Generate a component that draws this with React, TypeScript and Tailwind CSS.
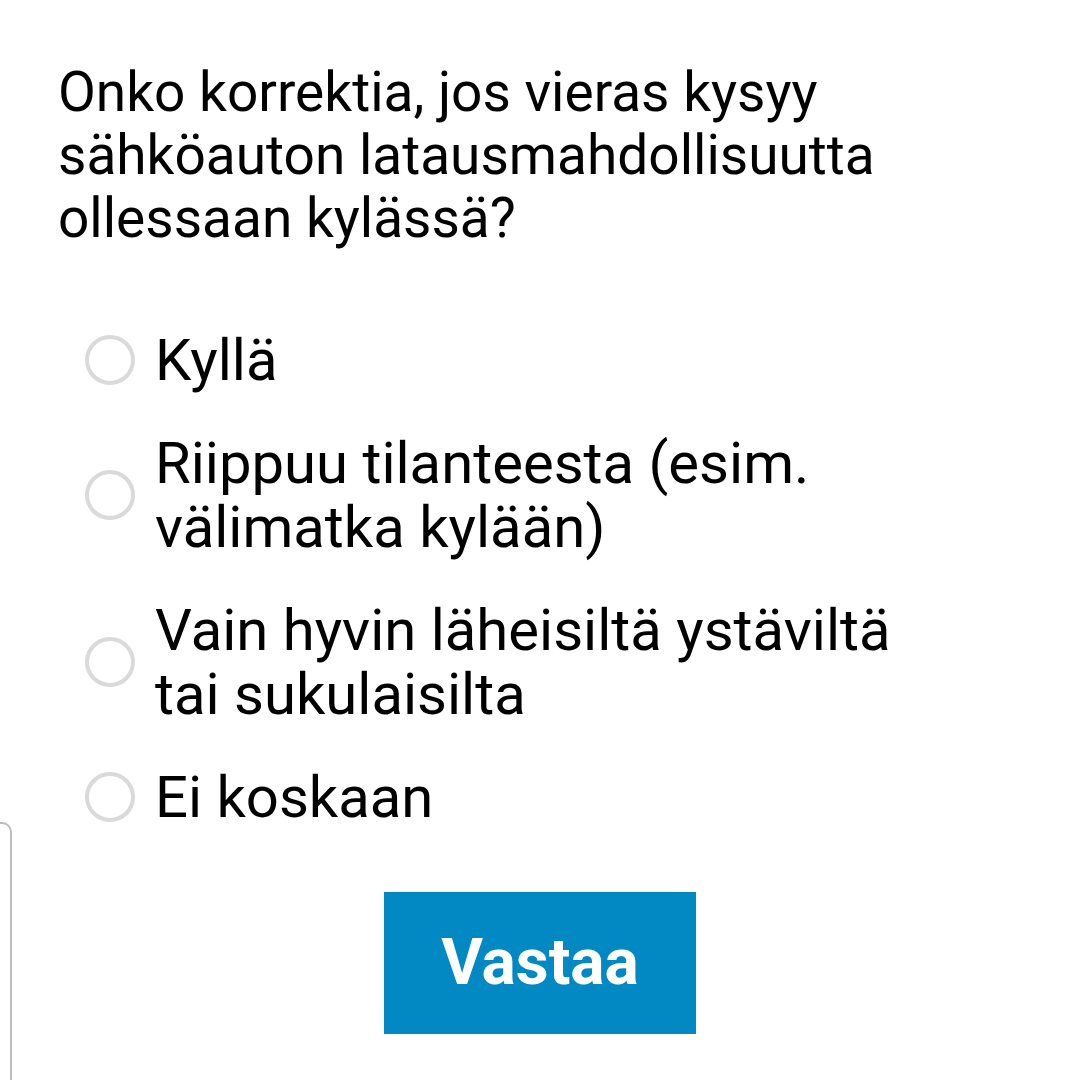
import React from "react";

const options = [
  "Kyllä",
  "Riippuu tilanteesta (esim. välimatka kylään)",
  "Vain hyvin läheisiltä ystäviltä tai sukulaisilta",
  "Ei koskaan",
];

export default function App() {
  return (
    <div
      className="relative w-[1080px] h-[1080px] overflow-hidden bg-white text-black"
      style={{ fontFamily: "Roboto, 'Noto Sans', sans-serif" }}
    >
      {/* edge of the next card, peeking in from the left */}
      <div className="absolute left-[-100px] top-[822px] w-[112px] h-[400px] rounded-tr-[10px] border-2 border-[#bdbdbd] bg-white" />

      <div className="flex flex-col pt-[61px]">
        <h1 className="pl-[58px] w-[940px] text-[55px] leading-[63px] font-normal">
          Onko korrektia, jos vieras kysyy sähköauton latausmahdollisuutta ollessaan kylässä?
        </h1>

        <div className="mt-[78px] pl-[85px] flex flex-col gap-[39px]">
          {options.map((label) => (
            <label key={label} className="flex items-center gap-[20px]">
              <span className="w-[50px] h-[50px] shrink-0 rounded-full border-[4px] border-[#dadada] bg-white" />
              <span className="w-[790px] text-[58px] leading-[64px]">{label}</span>
            </label>
          ))}
        </div>

        <div className="mt-[63px] flex justify-center">
          <button className="w-[312px] h-[142px] bg-[#0288c2] text-white text-[64px] font-bold">
            Vastaa
          </button>
        </div>
      </div>
    </div>
  );
}
